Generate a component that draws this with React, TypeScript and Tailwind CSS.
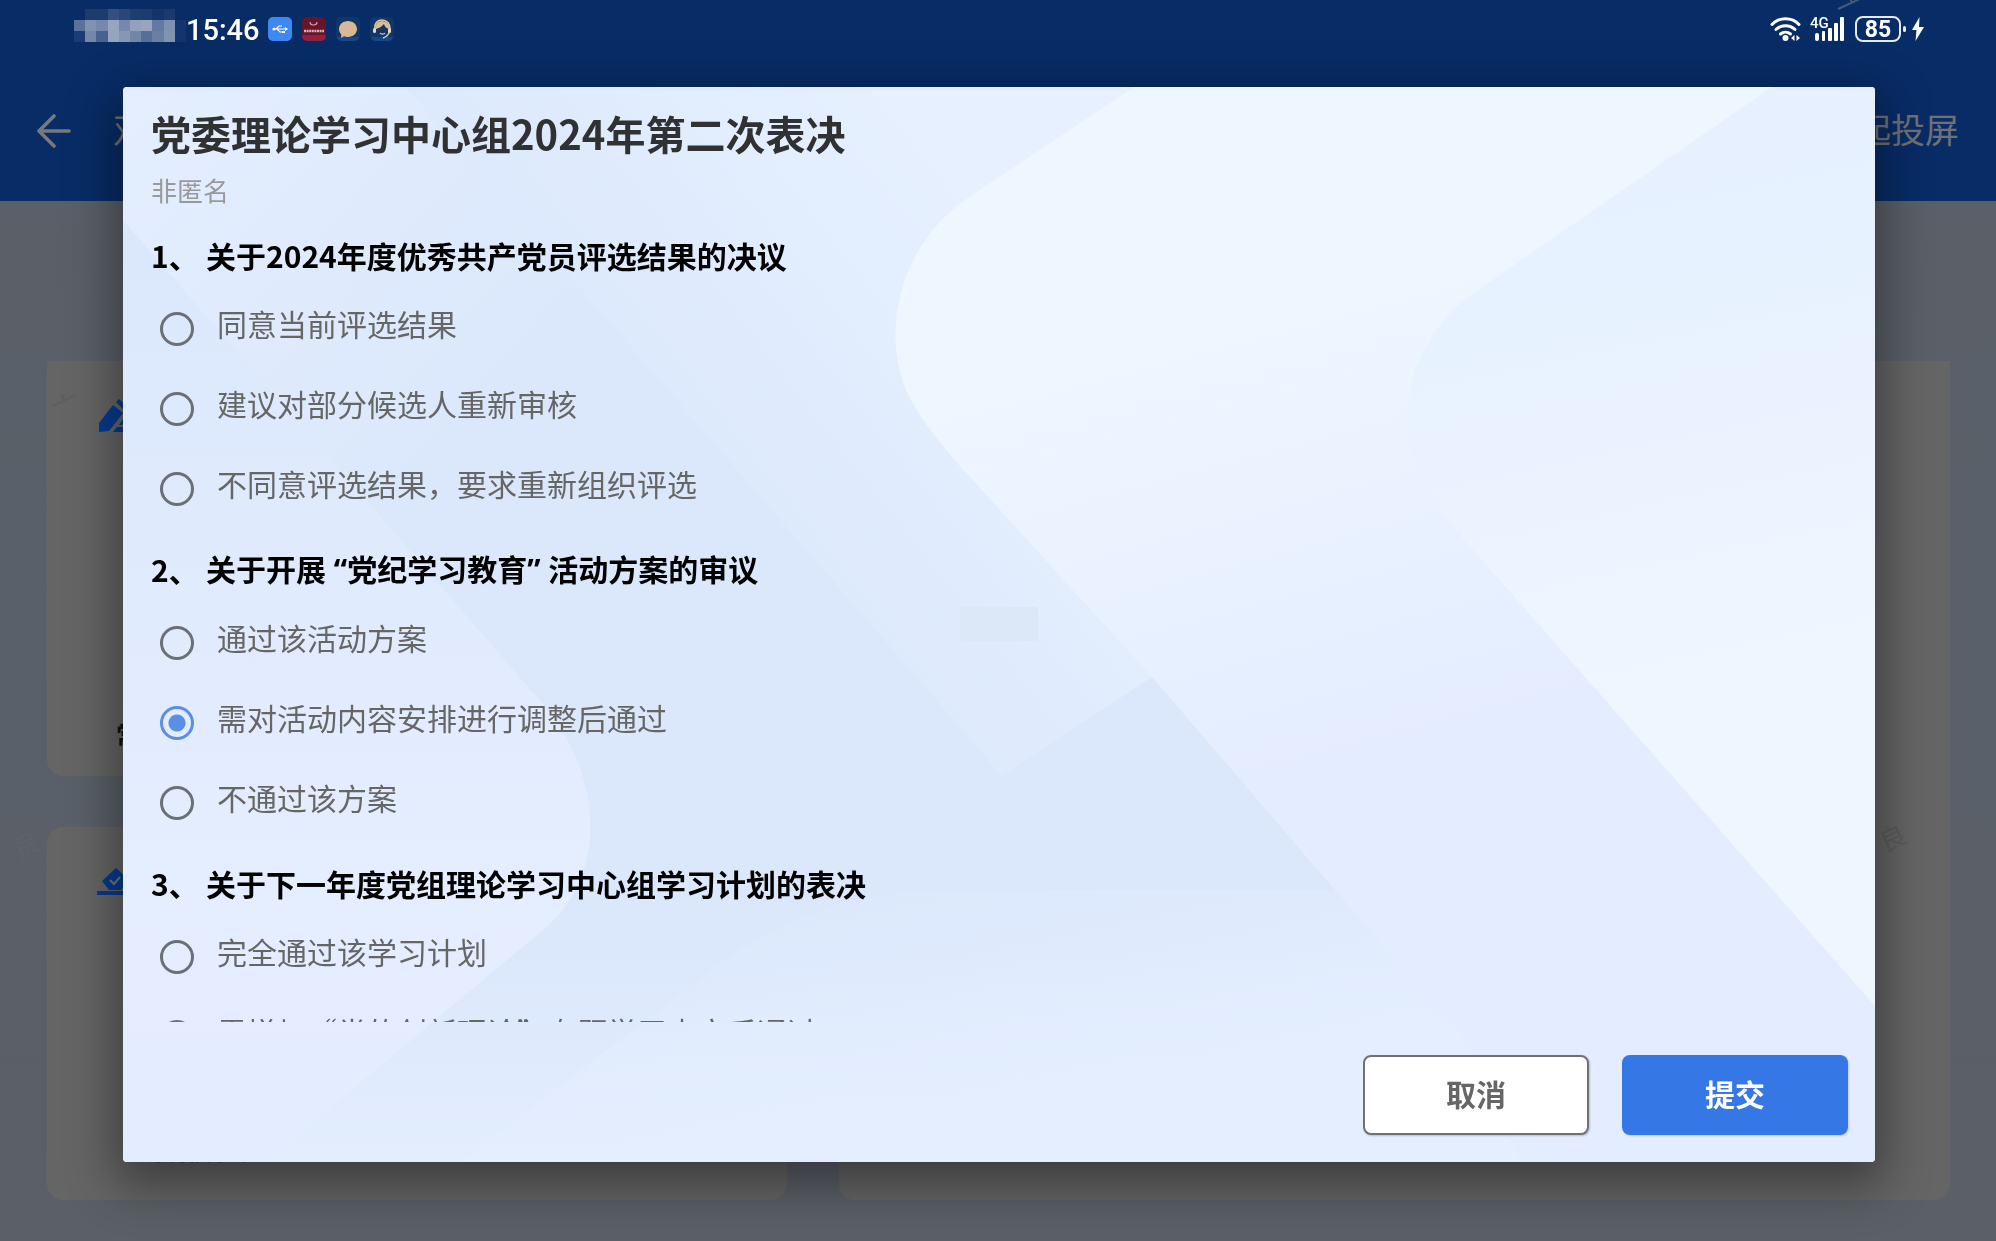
import { useState } from "react";

type Question = { id: string; title: React.ReactNode; options: string[] };

const questions: Question[] = [
  {
    id: "q1",
    title: "关于2024年度优秀共产党员评选结果的决议",
    options: ["同意当前评选结果", "建议对部分候选人重新审核", "不同意评选结果，要求重新组织评选"],
  },
  {
    id: "q2",
    title: (
      <>
        关于开展<span className="font-['Noto_Sans']"> “</span>党纪学习教育<span className="font-['Noto_Sans']">” </span>
        活动方案的审议
      </>
    ),
    options: ["通过该活动方案", "需对活动内容安排进行调整后通过", "不通过该方案"],
  },
  {
    id: "q3",
    title: "关于下一年度党组理论学习中心组学习计划的表决",
    options: ["完全通过该学习计划", "需增加“党的创新理论”专题学习内容后通过"],
  },
];

const mosaic = [
  ["", "#1c3c70", "#1c3c70", "#34507f", "#2a4777", "#1f3e70", "#1c3c70", "#14346a", "#1b3b6f", ""],
  ["#5a7199", "#8192b1", "#7788aa", "#99a5bf", "#7688ab", "#93a1bd", "#99a5bd", "#64799f", "#8090b0", "#14356c"],
  ["#1c3d73", "#7487aa", "#47628f", "#97a4be", "#8796b4", "#7286aa", "#566f9a", "#6a7fa5", "#8293b2", "#14356c"],
];

function StatusBar() {
  return (
    <div className="relative z-20 flex h-[60px] items-start justify-between pl-[74px] pr-[71px] text-white">
      <div className="flex items-start pt-[9px]">
        <div className="grid w-[112px] grid-cols-10">
          {mosaic.flat().map((c, i) => (
            <span key={i} className="h-[11px]" style={{ backgroundColor: c || undefined }} />
          ))}
        </div>
        <time className="h-10 font-['Roboto'] text-[29px] font-medium leading-[42px]">15:46</time>
        <div className="ml-2 mt-2 flex gap-[10px]">
          <svg viewBox="0 0 24 24" className="size-6">
            <rect width="24" height="24" rx="5" fill="#3f87f2" />
            <g stroke="#fff" strokeWidth="1.2" fill="none">
              <path d="M5 12h13M8 12l3-3h3M9 12l3 3h3" />
            </g>
            <circle cx="6" cy="12" r="1.6" fill="#fff" />
            <path d="M17 10l3 2-3 2z" fill="#fff" />
            <rect x="14" y="14" width="3" height="2" fill="#fff" />
          </svg>
          <svg viewBox="0 0 24 24" className="size-6">
            <rect width="24" height="24" rx="5" fill="#66152a" />
            <path d="M0 18h24v1a5 5 0 0 1-5 5H5a5 5 0 0 1-5-5z" fill="#92203f" />
            <path d="M8 5c0 4 7 4 7 0" stroke="#d8a9a5" strokeWidth="1.2" fill="none" />
            <path d="M2 14h20" stroke="#d9b3b6" strokeWidth="2.4" strokeDasharray="2 .6" />
          </svg>
          <svg viewBox="0 0 24 24" className="size-6">
            <rect width="24" height="24" rx="5" fill="#123766" />
            <path d="M1 20h22a5 5 0 0 1-4 4H5a5 5 0 0 1-4-4z" fill="#17468c" />
            <path d="M12 4c5 0 9 3.600 9 8s-4 8-9 8c-1.500 0-3-.3-4-.8L5 21l.3-3.500C4 16 3 14 3 12c0-4.400 4-8 9-8z" fill="#d9b995" />
          </svg>
          <svg viewBox="0 0 24 24" className="size-6">
            <rect width="24" height="24" rx="5" fill="#123766" />
            <path d="M1 20h22a5 5 0 0 1-4 4H5a5 5 0 0 1-4-4z" fill="#17468c" />
            <path d="M5 13C4 7 7 3 12 3s8 4 8 9c0 4-3 8-7 9" stroke="#e0c6a4" strokeWidth="1.600" fill="none" />
            <path d="M6 12c4-1 6-3 8-5 1 3 2 4 5 5 1-5-3-8-7-8s-7 3-6 8z" fill="#dfbc92" />
            <rect x="3" y="11" width="3" height="5" rx="1.500" fill="#e8d6c0" />
            <rect x="18" y="11" width="3" height="5" rx="1.500" fill="#e8d6c0" />
            <path d="M10 16c1 1.500 4 1.500 5 0" stroke="#e8d6c0" strokeWidth="1.200" fill="none" />
          </svg>
        </div>
      </div>
      <div className="flex items-start pt-4">
        <svg viewBox="0 0 31 26" className="h-[26px] w-[31px]" aria-label="Wi-Fi">
          <g fill="none" stroke="#fff" strokeWidth="3" strokeLinecap="round">
            <path d="M2 8.500C9 .8 22 .8 29 8.500" />
            <path d="M6 13.500c5.500-5 13.500-5 19 0" />
            <path d="M10.500 18c3-2.500 7-2.500 10 0" />
          </g>
          <circle cx="15.500" cy="22" r="3" fill="#fff" />
          <path d="M21 22l3.500-3v6zM30 22l-3.500-3v6z" fill="#fff" />
        </svg>
        <div className="relative ml-[13px] h-[26px] w-[32px]">
          <span className="absolute -left-1 -top-px font-['Roboto'] text-[15px] font-medium leading-[16px]">4G</span>
          <svg viewBox="0 0 32 26" className="h-[26px] w-[32px]" aria-label="4G">
            <g fill="#fff">
              <rect x="1" y="17" width="4" height="8" rx="2" />
              <rect x="8" y="15" width="3" height="10" rx="1" />
              <rect x="14" y="12" width="4" height="13" rx="1" />
              <rect x="20" y="7" width="4" height="18" rx="1" />
              <rect x="26" y="1" width="4" height="24" rx="1" />
            </g>
          </svg>
        </div>
        <div className="ml-[9px] flex h-[26px] w-[46px] items-center justify-center rounded-lg border-2 border-white/90 font-['Roboto'] text-[23px] font-bold leading-none">
          85
        </div>
        <div className="ml-[2px] mt-[10px] h-[6px] w-[3px] rounded-sm bg-white/90" />
        <svg viewBox="0 0 14 26" className="ml-[5px] h-[26px] w-[14px]" aria-label="充电中">
          <path d="M8.500 1L1 14h4.500L4.500 25 13 11H8z" fill="#fff" />
        </svg>
      </div>
    </div>
  );
}

function Backdrop() {
  return (
    <svg className="absolute inset-0 h-full w-full" viewBox="123 87 1752 1075" preserveAspectRatio="none" aria-hidden="true">
      <defs>
        <linearGradient id="base" x1="0" y1="0" x2="0" y2="1">
          <stop offset="0" stopColor="#e0ebfc" />
          <stop offset=".3" stopColor="#dbe8fb" />
          <stop offset=".8" stopColor="#dbe8fb" />
          <stop offset="1" stopColor="#e3edfe" />
        </linearGradient>
        <linearGradient id="lobe" gradientUnits="userSpaceOnUse" x1="123" y1="250" x2="123" y2="1162">
          <stop offset="0" stopColor="#dbe8fb" />
          <stop offset=".3" stopColor="#dfeafd" />
          <stop offset=".7" stopColor="#e5eeff" />
          <stop offset="1" stopColor="#e3edff" />
        </linearGradient>
        <linearGradient id="corner" gradientUnits="userSpaceOnUse" x1="123" y1="87" x2="480" y2="420">
          <stop offset="0" stopColor="#e4eeff" />
          <stop offset="1" stopColor="#dbe8fb" />
        </linearGradient>
        <linearGradient id="strip" gradientUnits="userSpaceOnUse" x1="1060" y1="300" x2="740" y2="550">
          <stop offset="0" stopColor="#e6f0ff" />
          <stop offset="1" stopColor="#dce9fc" />
        </linearGradient>
        <linearGradient id="panel" gradientUnits="userSpaceOnUse" x1="1000" y1="380" x2="1120" y2="830">
          <stop offset="0" stopColor="#eef6ff" />
          <stop offset=".48" stopColor="#ebf2ff" />
          <stop offset=".55" stopColor="#e7f1ff" />
          <stop offset="1" stopColor="#e3edff" />
        </linearGradient>
        <linearGradient id="right" gradientUnits="userSpaceOnUse" x1="1500" y1="150" x2="1620" y2="720">
          <stop offset="0" stopColor="#e6f0ff" />
          <stop offset=".3" stopColor="#e7f2ff" />
          <stop offset=".5" stopColor="#ebf2ff" />
          <stop offset="1" stopColor="#eef7ff" />
        </linearGradient>
        <linearGradient id="glow" gradientUnits="userSpaceOnUse" x1="800" y1="880" x2="860" y2="1162">
          <stop offset="0" stopColor="#e4eeff" stopOpacity="0" />
          <stop offset="1" stopColor="#e4eeff" />
        </linearGradient>
      </defs>
      <rect x="123" y="87" width="1752" height="1075" fill="url(#base)" />
      <path d="M123 87H406L700 424 560 740 123 223z" fill="url(#corner)" />
      <path d="M406 87H1200L1152 677 1002 776z" fill="url(#strip)" />
      <path d="M123 220L542 703C605 778 610 880 537 935L265 1162H123z" fill="url(#lobe)" />
      <path d="M460 1162L725 960C790 915 860 890 960 890H1400L1520 1162z" fill="url(#glow)" />
      <path
        d="M1134 87L968 198C896 246 876 345 915 407 930 432 945 448 960 466L1152 677 1460 1035C1480 1070 1530 1130 1560 1162H1875V87z"
        fill="url(#panel)"
      />
      <path d="M1772 87L1478 290C1410 335 1390 420 1422 478 1440 515 1460 535 1482 560L1875 1006V87z" fill="url(#right)" />
      <rect x="960" y="607" width="78" height="34" rx="2" fill="#dce8f8" />
    </svg>
  );
}

function VoteDialog() {
  const [answers, setAnswers] = useState<Record<string, number>>({ q2: 1 });
  return (
    <div className="fixed inset-0 z-10 flex pb-[79px] pl-[123px] pr-[121px] pt-[87px]">
      <form
        role="dialog"
        aria-labelledby="vote-title"
        onSubmit={(e) => e.preventDefault()}
        className="relative flex min-w-0 flex-1 flex-col overflow-hidden rounded shadow-[0_16px_48px_8px_rgba(0,0,0,0.4)]"
      >
        <Backdrop />
        <div className="relative flex min-h-0 flex-1 flex-col px-7 pt-[18px]">
          <h1 id="vote-title" className="text-[40px] font-bold leading-[56px] text-[#303133]">
            党委理论学习中心组2024年第二次表决
          </h1>
          <p className="mt-[11px] text-[26px] leading-9 text-[#999]">非匿名</p>
          <div className="mt-[21px] min-h-0 flex-1 overflow-hidden">
            {questions.map((q, n) => (
              <fieldset key={q.id} className="pb-[14px]">
                <legend className="flex h-[60px] items-center whitespace-pre pb-2 text-[30px] font-bold text-black">
                  <span className="w-[55px]">{n + 1}、</span>
                  <span>{q.title}</span>
                </legend>
                {q.options.map((label, i) => (
                  <label key={label} className="flex h-20 items-center gap-[23px] pl-[9px] text-[30px] text-[#666]">
                    <input
                      type="radio"
                      name={q.id}
                      checked={answers[q.id] === i}
                      onChange={() => setAnswers({ ...answers, [q.id]: i })}
                      className="size-[34px] shrink-0 appearance-none rounded-full border-[3px] border-[#6b6f77] checked:border-[#5b8fe3] checked:bg-[radial-gradient(circle,#5b8fe3_8px,transparent_9px)]"
                    />
                    <span className="pb-3">{label}</span>
                  </label>
                ))}
              </fieldset>
            ))}
          </div>
        </div>
        <div className="relative flex justify-end gap-[33px] pb-[27px] pr-[27px] pt-[33px] text-[30px] font-bold">
          <button
            type="button"
            className="h-20 w-[226px] rounded-lg border-2 border-[#6f7174] bg-white pb-1 text-[#666] shadow-[1px_1px_2px_rgba(0,0,0,0.2)]"
          >
            取消
          </button>
          <button type="submit" className="h-20 w-[226px] rounded-lg bg-[#3577e5] pb-1 text-white shadow-[1px_1px_2px_rgba(0,0,0,0.15)]">
            提交
          </button>
        </div>
      </form>
    </div>
  );
}

export default function App() {
  return (
    <div
      lang="zh-CN"
      className="relative flex min-h-screen flex-col overflow-hidden bg-[linear-gradient(180deg,#5c5f66,#596069_40%,#5b5f67)] font-['Noto_Sans_CJK_SC',sans-serif]"
    >
      <header className="relative h-[201px] bg-[#082c66]">
        <svg viewBox="0 0 30 12" className="absolute right-[130px] top-0 h-3 w-[30px]" aria-hidden="true">
          <path d="M2 9L28 -3M14 -2L16 3" stroke="#4a5a74" strokeWidth="2" fill="none" />
        </svg>
        <StatusBar />
        <div className="flex h-[141px] items-center justify-between px-[37px] pb-1 text-[34px] text-[#707174]">
          <div className="flex items-center gap-[42px]">
            <button type="button" aria-label="返回" className="pt-1">
              <svg viewBox="0 0 34 34" className="size-[34px]" fill="none" stroke="#777a7d" strokeWidth="3.600" strokeLinecap="round" strokeLinejoin="round">
                <path d="M32 17H2M17 2L2 17L17 32" />
              </svg>
            </button>
            <span>双</span>
          </div>
          <button type="button">发起投屏</button>
        </div>
      </header>
      <main className="grid flex-1 grid-cols-[740fr_1111fr] gap-[52px] pb-[41px] pl-[47px] pr-[46px] pt-40">
        <div className="flex flex-col gap-[51px]">
          <section className="relative flex h-[415px] flex-col justify-between rounded-b-2xl bg-[#656565] pb-6 pl-[52px] pt-[38px]">
            <svg viewBox="0 0 34 34" className="size-[34px]" fill="#053b8f" aria-hidden="true">
              <path d="M0 33V24L14 6L24 14L10 32zM17 3L20 0L28 7L25 11zM14 33L18 28H34V33zM20 26L25 19L34 18V26z" />
            </svg>
            <svg viewBox="0 0 30 14" className="absolute left-1 top-8 h-[14px] w-[30px]" aria-hidden="true">
              <path d="M1 13L25 2M10 1L13 7" stroke="#5f5f5f" strokeWidth="2" fill="none" />
            </svg>
            <span className="pl-[17px] text-[24px] font-bold leading-9 text-[#111]">常用会议</span>
          </section>
          <section className="flex flex-1 flex-col justify-between rounded-2xl bg-[#656565] pb-[34px] pl-[50px] pt-10">
            <svg viewBox="0 0 38 28" className="h-7 w-[38px]" aria-hidden="true">
              <path d="M0 24H38V28H0zM19 1L33 14L24 23H12L5 14z" fill="#053b8f" />
              <path d="M13 13L17 17L23 10" stroke="#777" strokeWidth="2" fill="none" />
            </svg>
            <span className="pl-12 text-[22px] leading-8 text-[#4a3010]">等待投票中</span>
          </section>
        </div>
        <section className="rounded-b-2xl bg-[#656565]" />
      </main>
      <span aria-hidden="true" className="absolute right-[91px] top-[817px] -rotate-[25deg] text-[26px] text-[#5b5b5b]">
        良
      </span>
      <span aria-hidden="true" className="absolute left-[12px] top-[824px] -rotate-[25deg] text-[26px] text-[#5f6266]">
        良
      </span>
      <VoteDialog />
    </div>
  );
}
